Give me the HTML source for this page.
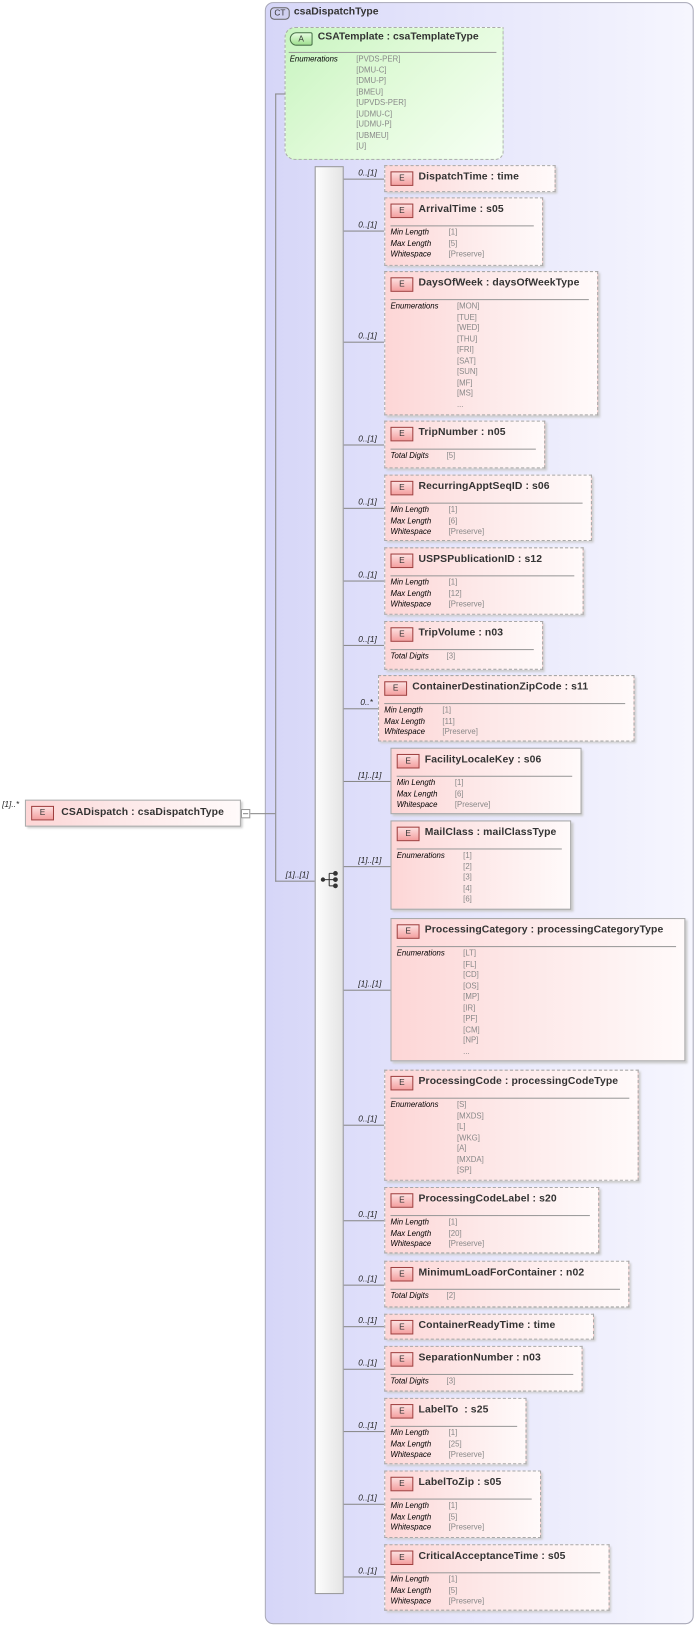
<!DOCTYPE html>
<html><head><meta charset="utf-8"><style>
*{margin:0;padding:0;box-sizing:border-box}
html,body{width:698px;height:1626px;background:#fff;overflow:hidden;font-family:"Liberation Sans",Arial,sans-serif}
#w{position:absolute;left:0;top:0;width:672px;height:1566px;transform:scale(1.0385);transform-origin:0 0}
.a{position:absolute}
.ct{left:255px;top:2px;width:413px;height:1562px;border:1px solid #a8a8b8;border-radius:8px;background:linear-gradient(90deg,#d6d6f8 0%,#e4e4fb 40%,#f6f6fe 100%)}
.ctb{left:260px;top:7px;width:19px;height:12px;border:1px solid #666;border-radius:4px;background:#d0d0f0;font-size:8px;text-align:center;line-height:10px;color:#333}
.ctt{left:283px;top:6px;font-size:10px;font-weight:bold;color:#333}
.c{position:absolute;border:1px dashed #a8a8a8;background:linear-gradient(90deg,#fdd6d6 0%,#fde8e8 45%,#fffafa 100%);box-shadow:2px 2px 2px #ccc}
.c.s{border-style:solid}
.c .e{position:absolute;left:5px;top:5px;width:22px;height:14px;border:1px solid #a04040;background:linear-gradient(#fde0e0,#f4a0a0);font-size:8px;color:#333;text-align:center;line-height:12px}
.c .t{position:absolute;left:32px;top:5px;font-size:10px;font-weight:bold;color:#333;white-space:nowrap;letter-spacing:.1px}
.c .l{position:absolute;left:5px;right:8px;top:26px;border-top:1px solid #999}
.c .f{position:absolute;left:5px;top:28px;font-size:7.5px;line-height:10.5px;white-space:nowrap}
.c .f i{display:inline-block;width:56px;color:#000}
.c .v{position:absolute;top:28px;font-size:7.5px;line-height:10.5px;color:#888;white-space:pre}
.h{position:absolute;height:1px;background:#888}
.vl{position:absolute;width:1px;background:#888}
.lb{position:absolute;font-size:8px;font-style:italic;color:#222;text-align:right;white-space:nowrap}
.att{left:274px;top:26px;width:211px;height:128px;border:1px dashed #aaa;border-radius:10px 0 8px 10px;background:linear-gradient(135deg,#c8f4c0 0%,#e0fad8 45%,#f6fff4 100%)}
.seq{left:303px;top:160px;width:28px;height:1375px;border:1px solid #999;background:linear-gradient(90deg,#fdfdfd,#e4e4e4)}
</style></head><body><div id="w">
<div class="a ct"></div>
<div class="a ctb">CT</div><div class="a ctt">csaDispatchType</div>

<div class="a att"></div>
<div class="a" style="left:279px;top:31px;width:22px;height:13px;border:1px solid #487048;border-radius:7px 2px 2px 7px;background:linear-gradient(#e6fde0,#a0e090);font-size:8px;text-align:center;line-height:11px;color:#333">A</div>
<div class="a" style="left:306px;top:30px;font-size:10px;font-weight:bold;color:#333">CSATemplate : csaTemplateType</div>
<div class="a" style="left:278px;top:50px;width:200px;border-top:1px solid #999"></div>
<div class="a" style="left:279px;top:52px;font-size:7.5px;font-style:italic">Enumerations</div>
<div class="a" style="left:343px;top:52px;font-size:7.5px;line-height:10.5px;color:#888;white-space:pre">[PVDS-PER]
[DMU-C]
[DMU-P]
[BMEU]
[UPVDS-PER]
[UDMU-C]
[UDMU-P]
[UBMEU]
[U]</div>

<!-- left element -->
<div class="lb" style="left:2px;top:770px">[1]..*</div>
<div class="c s" style="left:24px;top:770px;width:208px;height:26px;border-color:#aaa"><span class="e">E</span><span class="t" style="left:34px;top:6px">CSADispatch : csaDispatchType</span></div>
<div class="a" style="left:232px;top:779px;width:9px;height:9px;border:1px solid #999;background:#fff"></div>
<div class="h" style="left:234px;top:783px;width:5px"></div>
<div class="h" style="left:241px;top:783px;width:24px"></div>
<div class="vl" style="left:265px;top:90px;height:759px"></div>
<div class="h" style="left:265px;top:90px;width:10px"></div>
<div class="h" style="left:265px;top:848px;width:38px"></div>
<div class="lb" style="left:275px;top:838px">[1]..[1]</div>

<div class="a seq"></div>
<svg class="a" style="left:308px;top:837px" width="20" height="20" viewBox="0 0 20 20"><g fill="#333" stroke="#333" stroke-width="1"><circle cx="3" cy="10" r="1.6"/><line x1="3" y1="10" x2="9" y2="10"/><line x1="9" y1="4" x2="9" y2="16"/><line x1="9" y1="4" x2="14" y2="4"/><line x1="9" y1="10" x2="14" y2="10"/><line x1="9" y1="16" x2="14" y2="16"/><circle cx="15" cy="4" r="1.8"/><circle cx="15" cy="10" r="1.8"/><circle cx="15" cy="16" r="1.8"/></g></svg>

<!-- connectors -->
<div class="h" style="left:331px;top:172px;width:39px"></div><div class="lb" style="left:345px;top:162px">0..[1]</div>
<div class="h" style="left:331px;top:222px;width:39px"></div><div class="lb" style="left:345px;top:212px">0..[1]</div>
<div class="h" style="left:331px;top:329px;width:39px"></div><div class="lb" style="left:345px;top:319px">0..[1]</div>
<div class="h" style="left:331px;top:428px;width:39px"></div><div class="lb" style="left:345px;top:418px">0..[1]</div>
<div class="h" style="left:331px;top:489px;width:39px"></div><div class="lb" style="left:345px;top:479px">0..[1]</div>
<div class="h" style="left:331px;top:559px;width:39px"></div><div class="lb" style="left:345px;top:549px">0..[1]</div>
<div class="h" style="left:331px;top:621px;width:39px"></div><div class="lb" style="left:345px;top:611px">0..[1]</div>
<div class="h" style="left:331px;top:682px;width:33px"></div><div class="lb" style="left:347px;top:672px">0..*</div>
<div class="h" style="left:331px;top:752px;width:45px"></div><div class="lb" style="left:345px;top:742px">[1]..[1]</div>
<div class="h" style="left:331px;top:834px;width:45px"></div><div class="lb" style="left:345px;top:824px">[1]..[1]</div>
<div class="h" style="left:331px;top:953px;width:45px"></div><div class="lb" style="left:345px;top:943px">[1]..[1]</div>
<div class="h" style="left:331px;top:1083px;width:39px"></div><div class="lb" style="left:345px;top:1073px">0..[1]</div>
<div class="h" style="left:331px;top:1175px;width:39px"></div><div class="lb" style="left:345px;top:1165px">0..[1]</div>
<div class="h" style="left:331px;top:1237px;width:39px"></div><div class="lb" style="left:345px;top:1227px">0..[1]</div>
<div class="h" style="left:331px;top:1277px;width:39px"></div><div class="lb" style="left:345px;top:1267px">0..[1]</div>
<div class="h" style="left:331px;top:1318px;width:39px"></div><div class="lb" style="left:345px;top:1308px">0..[1]</div>
<div class="h" style="left:331px;top:1378px;width:39px"></div><div class="lb" style="left:345px;top:1368px">0..[1]</div>
<div class="h" style="left:331px;top:1448px;width:39px"></div><div class="lb" style="left:345px;top:1438px">0..[1]</div>
<div class="h" style="left:331px;top:1518px;width:39px"></div><div class="lb" style="left:345px;top:1508px">0..[1]</div>

<!-- cards -->
<div class="c" style="left:370px;top:159px;width:165px;height:26px"><span class="e">E</span><span class="t">DispatchTime : time</span></div>

<div class="c" style="left:370px;top:190px;width:153px;height:66px"><span class="e">E</span><span class="t">ArrivalTime : s05</span><span class="l"></span><div class="f"><i>Min Length</i><br><i>Max Length</i><br><i>Whitespace</i></div><div class="v" style="left:61px">[1]
[5]
[Preserve]</div></div>

<div class="c" style="left:370px;top:261px;width:206px;height:139px"><span class="e">E</span><span class="t">DaysOfWeek : daysOfWeekType</span><span class="l"></span><div class="f"><i>Enumerations</i></div><div class="v" style="left:69px">[MON]
[TUE]
[WED]
[THU]
[FRI]
[SAT]
[SUN]
[MF]
[MS]
...</div></div>

<div class="c" style="left:370px;top:405px;width:155px;height:46px"><span class="e">E</span><span class="t">TripNumber : n05</span><span class="l"></span><div class="f"><i>Total Digits</i></div><div class="v" style="left:59px">[5]</div></div>

<div class="c" style="left:370px;top:457px;width:200px;height:64px"><span class="e">E</span><span class="t">RecurringApptSeqID : s06</span><span class="l"></span><div class="f"><i>Min Length</i><br><i>Max Length</i><br><i>Whitespace</i></div><div class="v" style="left:61px">[1]
[6]
[Preserve]</div></div>

<div class="c" style="left:370px;top:527px;width:192px;height:65px"><span class="e">E</span><span class="t">USPSPublicationID : s12</span><span class="l"></span><div class="f"><i>Min Length</i><br><i>Max Length</i><br><i>Whitespace</i></div><div class="v" style="left:61px">[1]
[12]
[Preserve]</div></div>

<div class="c" style="left:370px;top:598px;width:153px;height:47px"><span class="e">E</span><span class="t">TripVolume : n03</span><span class="l"></span><div class="f"><i>Total Digits</i></div><div class="v" style="left:59px">[3]</div></div>

<div class="c" style="left:364px;top:650px;width:247px;height:64px"><span class="e">E</span><span class="t">ContainerDestinationZipCode : s11</span><span class="l"></span><div class="f"><i>Min Length</i><br><i>Max Length</i><br><i>Whitespace</i></div><div class="v" style="left:61px">[1]
[11]
[Preserve]</div></div>

<div class="c s" style="left:376px;top:720px;width:184px;height:64px"><span class="e">E</span><span class="t">FacilityLocaleKey : s06</span><span class="l"></span><div class="f"><i>Min Length</i><br><i>Max Length</i><br><i>Whitespace</i></div><div class="v" style="left:61px">[1]
[6]
[Preserve]</div></div>

<div class="c s" style="left:376px;top:790px;width:174px;height:86px"><span class="e">E</span><span class="t">MailClass : mailClassType</span><span class="l"></span><div class="f"><i>Enumerations</i></div><div class="v" style="left:69px">[1]
[2]
[3]
[4]
[6]</div></div>

<div class="c s" style="left:376px;top:884px;width:284px;height:138px"><span class="e">E</span><span class="t">ProcessingCategory : processingCategoryType</span><span class="l"></span><div class="f"><i>Enumerations</i></div><div class="v" style="left:69px">[LT]
[FL]
[CD]
[OS]
[MP]
[IR]
[PF]
[CM]
[NP]
...</div></div>

<div class="c" style="left:370px;top:1030px;width:245px;height:107px"><span class="e">E</span><span class="t">ProcessingCode : processingCodeType</span><span class="l"></span><div class="f"><i>Enumerations</i></div><div class="v" style="left:69px">[S]
[MXDS]
[L]
[WKG]
[A]
[MXDA]
[SP]</div></div>

<div class="c" style="left:370px;top:1143px;width:207px;height:64px"><span class="e">E</span><span class="t">ProcessingCodeLabel : s20</span><span class="l"></span><div class="f"><i>Min Length</i><br><i>Max Length</i><br><i>Whitespace</i></div><div class="v" style="left:61px">[1]
[20]
[Preserve]</div></div>

<div class="c" style="left:370px;top:1214px;width:236px;height:45px"><span class="e">E</span><span class="t">MinimumLoadForContainer : n02</span><span class="l"></span><div class="f"><i>Total Digits</i></div><div class="v" style="left:59px">[2]</div></div>

<div class="c" style="left:370px;top:1265px;width:202px;height:25px"><span class="e">E</span><span class="t">ContainerReadyTime : time</span></div>

<div class="c" style="left:370px;top:1296px;width:191px;height:44px"><span class="e">E</span><span class="t">SeparationNumber : n03</span><span class="l"></span><div class="f"><i>Total Digits</i></div><div class="v" style="left:59px">[3]</div></div>

<div class="c" style="left:370px;top:1346px;width:137px;height:64px"><span class="e">E</span><span class="t">LabelTo &nbsp;: s25</span><span class="l"></span><div class="f"><i>Min Length</i><br><i>Max Length</i><br><i>Whitespace</i></div><div class="v" style="left:61px">[1]
[25]
[Preserve]</div></div>

<div class="c" style="left:370px;top:1416px;width:151px;height:65px"><span class="e">E</span><span class="t">LabelToZip : s05</span><span class="l"></span><div class="f"><i>Min Length</i><br><i>Max Length</i><br><i>Whitespace</i></div><div class="v" style="left:61px">[1]
[5]
[Preserve]</div></div>

<div class="c" style="left:370px;top:1487px;width:217px;height:64px"><span class="e">E</span><span class="t">CriticalAcceptanceTime : s05</span><span class="l"></span><div class="f"><i>Min Length</i><br><i>Max Length</i><br><i>Whitespace</i></div><div class="v" style="left:61px">[1]
[5]
[Preserve]</div></div>

</div></body></html>
